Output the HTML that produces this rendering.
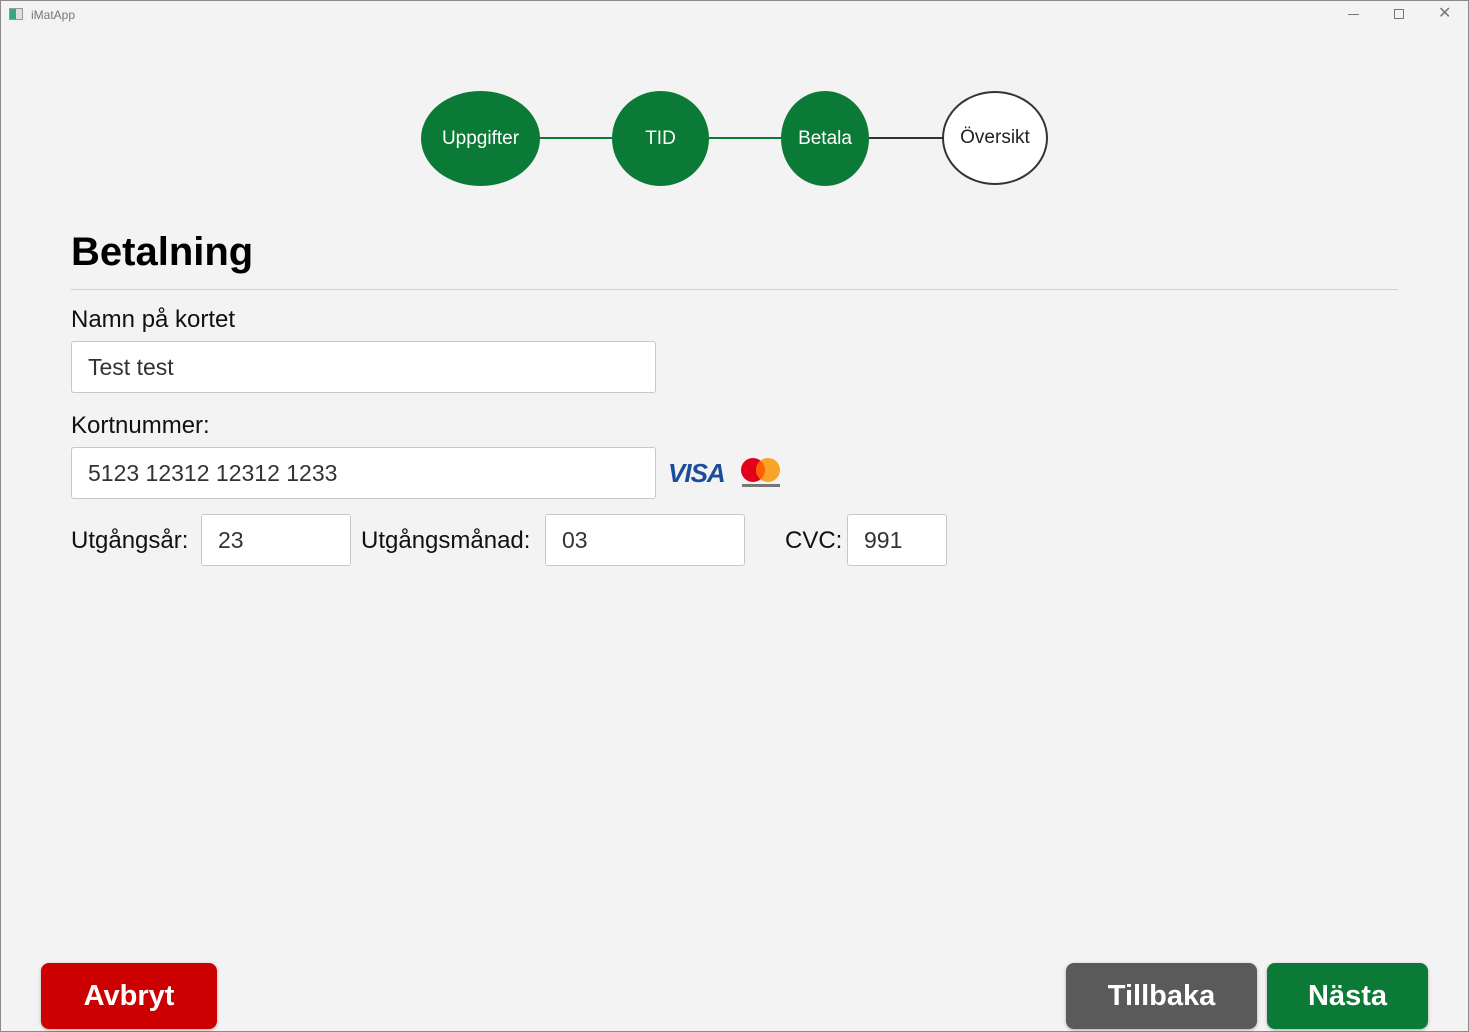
<!DOCTYPE html>
<html><head><meta charset="utf-8"><style>
*{margin:0;padding:0;box-sizing:border-box}
body{width:1469px;height:1032px;background:#f3f3f3;font-family:"Liberation Sans",sans-serif;position:relative;overflow:hidden}
.a{position:absolute;white-space:nowrap}
.c{position:absolute;border-radius:50%;background:#0b7a36;color:#fff;font-size:19px;display:flex;align-items:center;justify-content:center}
.ln{position:absolute;height:2px;top:137px}
.in{position:absolute;background:#fff;border:1px solid #c8c8c8;border-radius:3px;color:#333;font-size:23px;padding-left:16px;display:flex;align-items:center}
.lb{position:absolute;font-size:24px;color:#111;white-space:nowrap}
.b{position:absolute;border-radius:8px;color:#fff;font-weight:bold;font-size:29px;display:flex;align-items:center;justify-content:center;box-shadow:0 1px 3px rgba(0,0,0,.3)}
</style></head><body>
<div class="a" style="left:0;top:0;width:1469px;height:1032px;border:1px solid #8a8a8a"></div>
<div class="a" style="left:9px;top:8px;width:14px;height:12px;border:1px solid #999;background:linear-gradient(90deg,#3a7 0 50%,#ddd 50%)"></div>
<div class="a" style="left:31px;top:8px;font-size:12px;color:#777">iMatApp</div>
<div class="a" style="left:1348px;top:14px;width:11px;height:1px;background:#777"></div>
<div class="a" style="left:1394px;top:9px;width:10px;height:10px;border:1px solid #777"></div>
<div class="a" style="left:1438px;top:3px;font-size:16px;color:#777">✕</div>

<div class="ln" style="left:538px;width:76px;background:#0b7a36"></div>
<div class="ln" style="left:707px;width:76px;background:#0b7a36"></div>
<div class="ln" style="left:867px;width:77px;background:#333"></div>
<div class="c" style="left:421px;top:91px;width:119px;height:95px">Uppgifter</div>
<div class="c" style="left:612px;top:91px;width:97px;height:95px">TID</div>
<div class="c" style="left:781px;top:91px;width:88px;height:95px">Betala</div>
<div class="c" style="left:942px;top:91px;width:106px;height:94px;background:#fff;border:2px solid #333;color:#222">Översikt</div>

<div class="a" style="left:71px;top:230px;font-size:40px;font-weight:bold;color:#000">Betalning</div>
<div class="a" style="left:71px;top:289px;width:1327px;height:1px;background:#d0d0d0"></div>

<div class="lb" style="left:71px;top:306px">Namn på kortet</div>
<div class="in" style="left:71px;top:341px;width:585px;height:52px">Test test</div>
<div class="lb" style="left:71px;top:412px">Kortnummer:</div>
<div class="in" style="left:71px;top:447px;width:585px;height:52px">5123 12312 12312 1233</div>
<div class="a" style="left:668px;top:458px;font-size:26px;font-weight:bold;font-style:italic;color:#1a4d9c;letter-spacing:-1px">VISA</div>
<svg class="a" style="left:738px;top:455px" width="46" height="36"><circle cx="15" cy="15" r="12" fill="#e3001b"/><circle cx="30" cy="15" r="12" fill="#f7a01b" fill-opacity=".95"/><path d="M22.5 5.6a12 12 0 0 1 0 18.8a12 12 0 0 1 0-18.8z" fill="#ff5f00"/><rect x="4" y="29" width="38" height="3" fill="#777"/></svg>

<div class="lb" style="left:71px;top:527px">Utgångsår:</div>
<div class="in" style="left:201px;top:514px;width:150px;height:52px">23</div>
<div class="lb" style="left:361px;top:527px">Utgångsmånad:</div>
<div class="in" style="left:545px;top:514px;width:200px;height:52px">03</div>
<div class="lb" style="left:785px;top:527px">CVC:</div>
<div class="in" style="left:847px;top:514px;width:100px;height:52px">991</div>

<div class="b" style="left:41px;top:963px;width:176px;height:66px;background:#cc0000">Avbryt</div>
<div class="b" style="left:1066px;top:963px;width:191px;height:66px;background:#5a5a5a">Tillbaka</div>
<div class="b" style="left:1267px;top:963px;width:161px;height:66px;background:#0b7a36">Nästa</div>
</body></html>
